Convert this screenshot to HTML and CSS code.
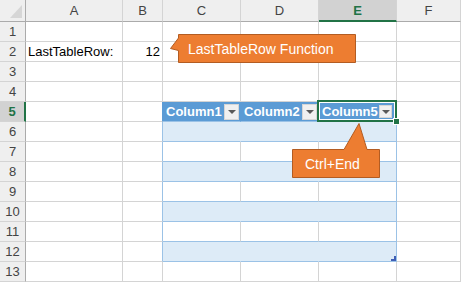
FILE: index.html
```html
<!DOCTYPE html>
<html lang="en">
<head>
  <meta charset="UTF-8" />
  <title>LastTableRow</title>
  <link rel="stylesheet" href="styles.css">
</head>
<body>
  <div class="sheet">
    <!-- column headers -->
    <div class="cell corner"><span class="tri"></span></div>
    <div class="cell hd">A</div>
    <div class="cell hd">B</div>
    <div class="cell hd">C</div>
    <div class="cell hd">D</div>
    <div class="cell hd sel">E</div>
    <div class="cell hd">F</div>

    <div class="cell rn">1</div>
    <div class="cell"></div><div class="cell"></div><div class="cell"></div><div class="cell"></div><div class="cell"></div><div class="cell"></div>

    <div class="cell rn">2</div>
    <div class="cell">LastTableRow:</div>
    <div class="cell num">12</div>
    <div class="cell"></div><div class="cell"></div><div class="cell"></div><div class="cell"></div>

    <div class="cell rn">3</div>
    <div class="cell"></div><div class="cell"></div><div class="cell"></div><div class="cell"></div><div class="cell"></div><div class="cell"></div>

    <div class="cell rn">4</div>
    <div class="cell"></div><div class="cell"></div><div class="cell"></div><div class="cell"></div><div class="cell"></div><div class="cell"></div>

    <!-- table header -->
    <div class="cell rn sel">5</div>
    <div class="cell"></div>
    <div class="cell tl top"></div>
    <div class="cell th">Column1<span class="dd"></span></div>
    <div class="cell th">Column2<span class="dd"></span></div>
    <div class="cell th last active">Column5<span class="dd"></span></div>
    <div class="cell"></div>

    <div class="cell rn">6</div>
    <div class="cell"></div><div class="cell tl"></div>
    <div class="cell band"></div><div class="cell band"></div><div class="cell band last"></div>
    <div class="cell"></div>

    <div class="cell rn">7</div>
    <div class="cell"></div><div class="cell tl"></div>
    <div class="cell plain"></div><div class="cell plain"></div><div class="cell plain last"></div>
    <div class="cell"></div>

    <div class="cell rn">8</div>
    <div class="cell"></div><div class="cell tl"></div>
    <div class="cell band"></div><div class="cell band"></div><div class="cell band last"></div>
    <div class="cell"></div>

    <div class="cell rn">9</div>
    <div class="cell"></div><div class="cell tl"></div>
    <div class="cell plain"></div><div class="cell plain"></div><div class="cell plain last"></div>
    <div class="cell"></div>

    <div class="cell rn">10</div>
    <div class="cell"></div><div class="cell tl"></div>
    <div class="cell band"></div><div class="cell band"></div><div class="cell band last"></div>
    <div class="cell"></div>

    <div class="cell rn">11</div>
    <div class="cell"></div><div class="cell tl"></div>
    <div class="cell plain"></div><div class="cell plain"></div><div class="cell plain last"></div>
    <div class="cell"></div>

    <div class="cell rn">12</div>
    <div class="cell"></div><div class="cell tl"></div>
    <div class="cell band"></div><div class="cell band"></div><div class="cell band last resize"></div>
    <div class="cell"></div>

    <div class="cell rn">13</div>
    <div class="cell"></div><div class="cell"></div><div class="cell"></div><div class="cell"></div><div class="cell"></div><div class="cell"></div>

    <!-- callouts -->
    <div class="callout callout-left">
      <svg width="188" height="31" viewBox="0 0 188 31">
        <path d="M9.5 1.5 H186.5 V29.5 H9.5 V17.5 L1.5 15.5 L9.5 5 Z" fill="#ed7d31" stroke="#b35c22" />
      </svg>
      <span>LastTableRow Function</span>
    </div>

    <div class="callout callout-up">
      <svg width="90" height="57" viewBox="0 0 90 57">
        <path d="M1.5 27.5 H53 L68 1.5 L76 27.5 H88.5 V55.5 H1.5 Z" fill="#ed7d31" stroke="#b35c22" />
      </svg>
      <span>Ctrl+End</span>
    </div>
  </div>
</body>
</html>
```

FILE: styles.css
```css
body {
  margin: 0;
  background: #fff;
  font-family: "Liberation Sans", Arial, sans-serif;
  font-size: 13px;
  color: #000;
}

.sheet {
  position: relative;
  display: grid;
  grid-template-columns: 26px 97px 40px 78px 78px 78px 64px;
  grid-template-rows: 22px repeat(13, 20px);
  width: 461px;
}

.cell {
  box-sizing: border-box;
  display: flex;
  align-items: center;
  padding: 0 2px;
  white-space: nowrap;
  overflow: hidden;
  border-right: 1px solid #d4d4d4;
  border-bottom: 1px solid #d4d4d4;
}

.num {
  justify-content: flex-end;
}

/* headers */
.corner {
  background: #efefef;
  border-right-color: #ababab;
  border-bottom-color: #ababab;
  justify-content: flex-end;
  align-items: flex-end;
  padding: 0 3px 3px 0;
}

.tri {
  width: 0;
  height: 0;
  border-left: 12px solid transparent;
  border-bottom: 13px solid #d6d6d6;
}

.hd {
  background: #efefef;
  border-bottom-color: #ababab;
  justify-content: center;
  color: #444;
}

.rn {
  background: #efefef;
  border-right-color: #ababab;
  justify-content: center;
  color: #444;
}

.hd.sel {
  background: #d2d2d2;
  border-bottom: 2px solid #217346;
  color: #217346;
  font-weight: bold;
}

.rn.sel {
  background: #d2d2d2;
  border-right: 2px solid #217346;
  color: #217346;
  font-weight: bold;
}

/* table */
.tl {
  border-right-color: #9bc2e6;
}

.tl.top {
  border-right-color: #5b9bd5;
}

.th {
  background: #5b9bd5;
  color: #fff;
  font-weight: bold;
  justify-content: space-between;
  padding: 0 1px 0 3px;
  border-right-color: #5b9bd5;
  border-bottom-color: #9bc2e6;
}

.dd {
  box-sizing: border-box;
  width: 15px;
  height: 16px;
  background: #f0f0f0;
  border: 1px solid #d6d6d6;
  display: flex;
  align-items: center;
  justify-content: center;
}

.dd::after {
  content: "";
  border-left: 4px solid transparent;
  border-right: 4px solid transparent;
  border-top: 4px solid #595959;
}

.band {
  background: #ddebf7;
  border-right-color: #ddebf7;
  border-bottom-color: #9bc2e6;
}

.plain {
  border-bottom-color: #9bc2e6;
}

.last {
  border-right-color: #9bc2e6;
}

/* selected cell E5 */
.active {
  position: relative;
  overflow: visible;
  padding-right: 4px;
  box-shadow: inset 1px 1px 0 #fff;
}

.active .dd {
  width: 13px;
  height: 13px;
}

.active::before {
  content: "";
  position: absolute;
  left: -2px;
  top: -2px;
  right: -1px;
  bottom: -1px;
  border: 2px solid #217346;
  box-shadow: inset 0 0 0 1px #fff;
  z-index: 2;
}

.active::after {
  content: "";
  position: absolute;
  right: -3px;
  bottom: -3px;
  width: 5px;
  height: 5px;
  background: #217346;
  outline: 1px solid #fff;
  z-index: 3;
}

.resize {
  position: relative;
}

.resize::after {
  content: "";
  position: absolute;
  right: 0;
  bottom: 0;
  width: 5px;
  height: 5px;
  background: #3f5fb5;
  clip-path: polygon(60% 0, 100% 0, 100% 100%, 0 100%, 0 60%, 60% 60%);
}

/* callouts */
.callout {
  position: absolute;
  z-index: 5;
  color: #fff;
  font-size: 14px;
}

.callout svg {
  position: absolute;
  left: 0;
  top: 0;
}

.callout span {
  position: relative;
  display: flex;
  align-items: center;
}

.callout-left {
  left: 169px;
  top: 33px;
  width: 188px;
  height: 31px;
}

.callout-left span {
  height: 31px;
  padding-left: 19px;
}

.callout-up {
  left: 291px;
  top: 122px;
  width: 90px;
  height: 57px;
}

.callout-up span {
  height: 29px;
  margin-top: 27px;
  padding-left: 14px;
}
```
